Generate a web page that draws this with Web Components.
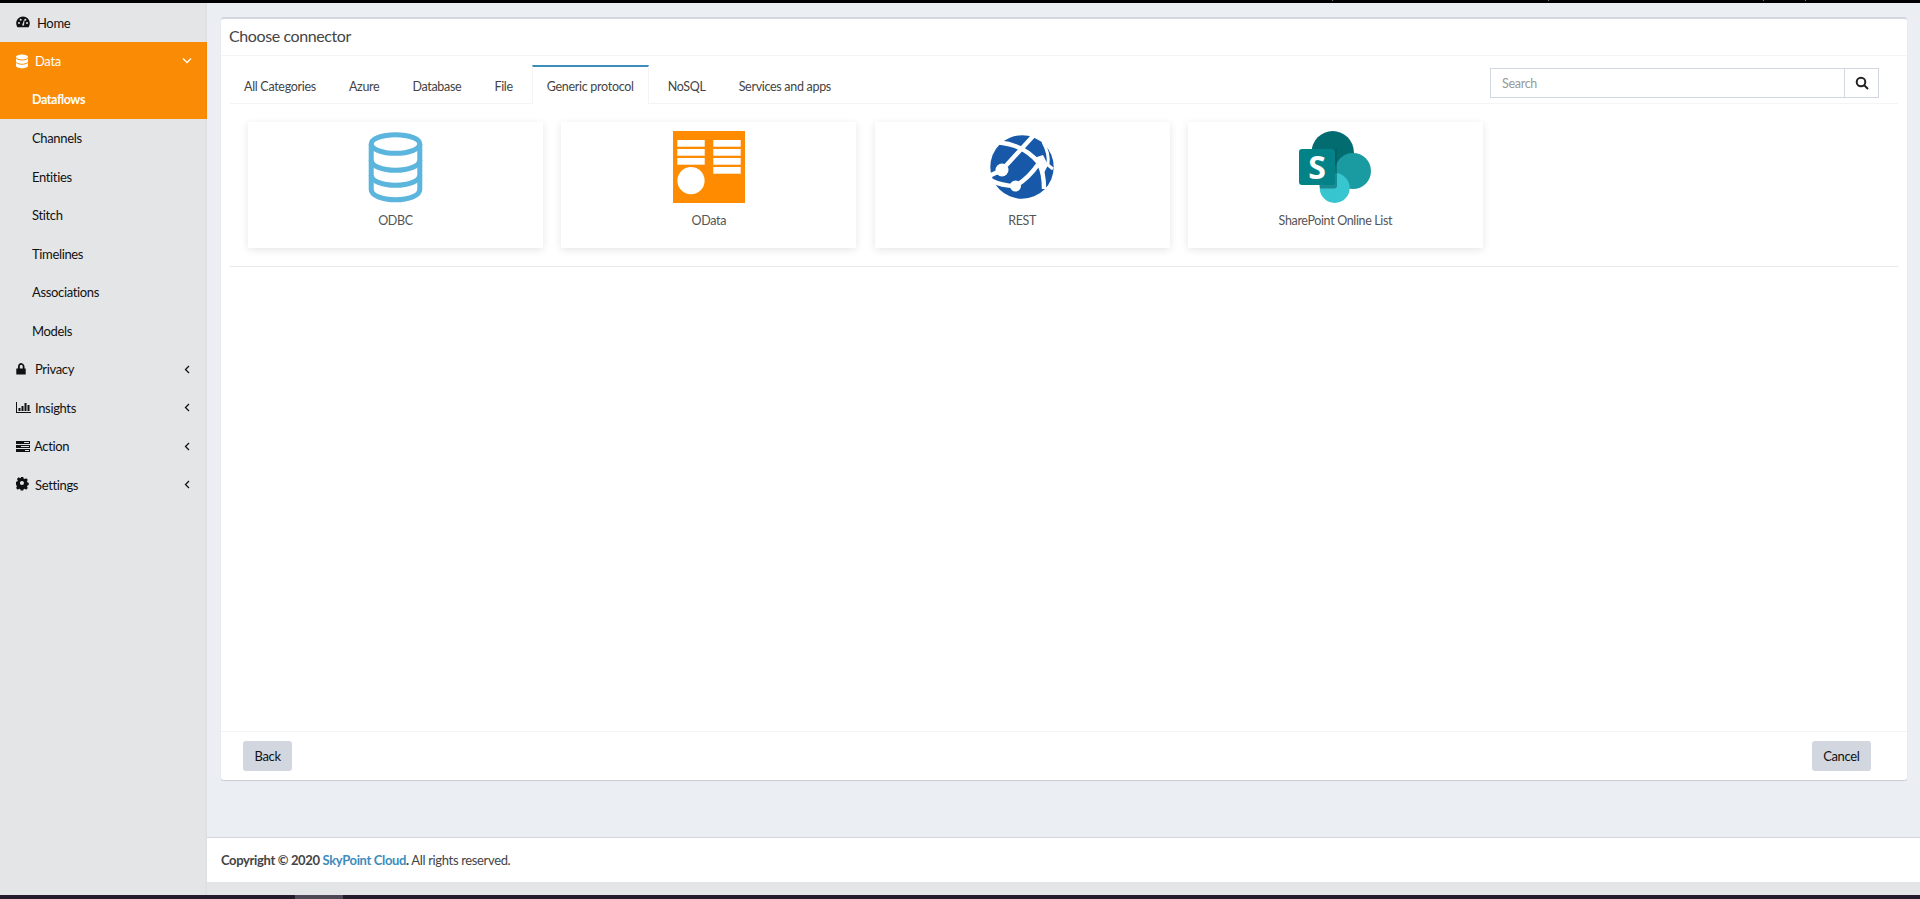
<!DOCTYPE html>
<html>
<head>
<meta charset="utf-8">
<title>Choose connector</title>
<style>
html, body { margin: 0; height: 100%; overflow: hidden; }
body { font-family: Lato, "Liberation Sans", sans-serif; font-size: 13px; letter-spacing: -.35px; color: #333; background: #e4e5e7; }
</style>
</head>
<body>
<app-shell>
	<side-nav slot="nav">
		<nav-item label="Home" icon="gauge" style="--gap: 21px"></nav-item>
		<nav-item label="Data" icon="database" active open></nav-item>
		<nav-item label="Dataflows" sub active strong></nav-item>
		<nav-item label="Channels" sub></nav-item>
		<nav-item label="Entities" sub></nav-item>
		<nav-item label="Stitch" sub></nav-item>
		<nav-item label="Timelines" sub></nav-item>
		<nav-item label="Associations" sub></nav-item>
		<nav-item label="Models" sub></nav-item>
		<nav-item label="Privacy" icon="lock" closed></nav-item>
		<nav-item label="Insights" icon="chart" closed></nav-item>
		<nav-item label="Action" icon="tasks" closed style="--gap: 18px"></nav-item>
		<nav-item label="Settings" icon="cog" closed></nav-item>
	</side-nav>
	<connector-panel slot="main" heading="Choose connector">
		<connector-tabs>
			<tab-link>All Categories</tab-link>
			<tab-link>Azure</tab-link>
			<tab-link>Database</tab-link>
			<tab-link>File</tab-link>
			<tab-link active>Generic protocol</tab-link>
			<tab-link>NoSQL</tab-link>
			<tab-link>Services and apps</tab-link>
			<search-box slot="tools"></search-box>
		</connector-tabs>
		<connector-row>
			<connector-card label="ODBC">
				<svg viewBox="0 0 72 72" width="72" height="72" fill="none" stroke="#5bb5dc" stroke-width="5">
					<ellipse cx="35.5" cy="13" rx="24.3" ry="9.3"/>
					<path d="M11.2 13v45.5c0 6 11 10.3 24.3 10.3s24.3-4.3 24.3-10.3V13"/>
					<path d="M11.2 29c0 6 11 10.3 24.3 10.3S59.8 35 59.8 29"/>
					<path d="M11.2 44c0 6 11 10.3 24.3 10.3S59.8 50 59.8 44"/>
				</svg>
			</connector-card>
			<connector-card label="OData">
				<svg viewBox="0 0 72 72" width="72" height="72">
					<rect width="72" height="72" fill="#ff8c00"/>
					<g fill="#fff">
						<rect x="4.3" y="9" width="27.4" height="6.7"/>
						<rect x="4.3" y="18" width="27.4" height="6.7"/>
						<rect x="4.3" y="27" width="27.4" height="6.7"/>
						<rect x="40.3" y="9" width="27.4" height="6.7"/>
						<rect x="40.3" y="18" width="27.4" height="6.7"/>
						<rect x="40.3" y="27" width="27.4" height="6.7"/>
						<rect x="40.3" y="36" width="27.4" height="6.7"/>
						<circle cx="18" cy="49.7" r="13.6"/>
					</g>
				</svg>
			</connector-card>
			<connector-card label="REST">
				<svg viewBox="0 0 72 72" width="72" height="72">
					<circle cx="36" cy="36" r="31.7" fill="#1759a8"/>
					<g fill="none" stroke="#fff" stroke-width="4.4">
						<path d="M13 11.500C30 13 44 21 53 32c3 6 5 14 5 26"/>
						<path d="M49 3 16 39 3 45"/>
						<path d="M53 32C47 41 38 50 29.500 55 20 55 12 53 4 49"/>
						<path d="M57 11c4 7 6 15 5 23l5 4" stroke-width="3"/>
					</g>
					<g fill="#fff">
						<circle cx="16" cy="39" r="6.500"/>
						<circle cx="29.500" cy="55" r="5.500"/>
						<path d="M48 27l9-3 5 10-5 10-4-6z"/>
					</g>
				</svg>
			</connector-card>
			<connector-card label="SharePoint Online List">
				<svg viewBox="0 0 72 72" width="72" height="72">
					<circle cx="33.7" cy="21.3" r="21.2" fill="#036c70"/>
					<circle cx="54" cy="40" r="18" fill="#1a9ba1"/>
					<circle cx="35.7" cy="57" r="15" fill="#37c6d0"/>
					<path d="M12 18h26v36.500q0 3-3 3H21z" fill="#035a5e" opacity=".55"/>
					<rect x="0" y="18" width="36" height="36" rx="3" fill="#038387"/>
					<text x="18" y="48" text-anchor="middle" letter-spacing="0" font-family="'Open Sans', 'Liberation Sans', sans-serif" font-weight="700" font-size="32" fill="#fff">S</text>
				</svg>
			</connector-card>
		</connector-row>
		<app-button slot="back">Back</app-button>
		<app-button slot="cancel">Cancel</app-button>
	</connector-panel>
	<page-footer slot="footer"></page-footer>
</app-shell>

<script>
const NAV_ICONS = {
	gauge: '<path d="M7 1.500C3.200 1.500.2 4.500.2 8.300c0 1.500.4 2.800 1.200 3.900h11.200c.8-1.100 1.200-2.400 1.200-3.900 0-3.800-3-6.800-6.800-6.800z"/><g fill="var(--hole)"><circle cx="3" cy="8" r="1"/><circle cx="4.700" cy="4.700" r="1"/><circle cx="9.300" cy="4.700" r="1"/><circle cx="11" cy="8" r="1"/><path d="M6 10.500 8 5l.5.100L8 10.500z"/></g>',
	database: '<ellipse cx="6" cy="3" rx="6" ry="2.600"/><path d="M0 4.600v2.600c0 1.400 2.700 2.500 6 2.500s6-1.100 6-2.500V4.600C11 5.900 8.700 6.600 6 6.600S1 5.900 0 4.600z"/><path d="M0 8.700v3c0 1.400 2.700 2.500 6 2.500s6-1.100 6-2.500v-3c-1 1.300-3.300 2-6 2s-5-.7-6-2z"/>',
	lock: '<path d="M2 6.500V4.500C2 2.300 3.800 1 5 1S8.500 2.300 8.500 4.500v2h1.200v6H.3v-6zm1.800 0h2.900V4.500C6.700 3.500 6 2.800 5.200 2.800s-1.400.7-1.400 1.700z"/>',
	chart: '<path d="M0 2h1v10h14v1H0z"/><rect x="2.500" y="8" width="2" height="3"/><rect x="5.500" y="6" width="2" height="5"/><rect x="8.500" y="3" width="2" height="8"/><rect x="11.500" y="5" width="2" height="6"/>',
	tasks: '<rect x="0" y="2" width="14" height="3"/><rect x="0" y="6" width="14" height="3"/><rect x="0" y="10" width="14" height="3"/><g fill="var(--hole)"><rect x="8" y="3" width="5" height="1"/><rect x="5" y="7" width="8" height="1"/><rect x="9" y="11" width="4" height="1"/></g>',
	cog: '<path fill-rule="evenodd" d="M5.500 1h3l.4 1.900 1.300.6 1.700-1 2 2-1 1.700.6 1.300 1.500.4v2.800l-1.500.4-.6 1.300 1 1.700-2 2-1.700-1-1.300.6-.4 1.300h-3l-.4-1.300-1.300-.6-1.700 1-2-2 1-1.700-.6-1.300L0 9.700V6.900l1.500-.4.6-1.300-1-1.700 2-2 1.700 1 1.300-.6zM7 5.900a2.400 2.400 0 1 0 0 4.800 2.400 2.400 0 0 0 0-4.800z" transform="translate(0 -1) scale(.85)"/>'
};

class AppShell extends HTMLElement {
	constructor() {
		super();
		this.attachShadow({ mode: 'open' });
		this.shadowRoot.innerHTML = `
		<style>
			:host { display: flex; flex-direction: column; height: 899px; }
			.top { flex: 0 0 3px; background: #000; display: flex; }
			.top i { width: 1px; height: 1px; background: #777; }
			.top i:nth-child(1) { margin-left: 1332px; }
			.top i:nth-child(2) { margin-left: 215px; }
			.top i:nth-child(3) { margin-left: 214px; }
			.top i:nth-child(4) { margin-left: 41px; }
			.middle { flex: 1; display: flex; min-height: 0; }
			.column { flex: 1; display: flex; flex-direction: column; min-width: 0; box-shadow: -1px 0 2px rgba(0,0,0,.04); }
			.content { flex: 1; background: #ebeef3; padding: 14px 13px 0 14px; }
			.bottom { flex: 0 0 4px; background: #231a2c; display: flex; }
			.bottom i { width: 48px; margin-left: 295px; background: #4f4855; }
			.foot-gap { height: 13px; background: #e4e5e7; }
		</style>
		<div class="top"><i></i><i></i><i></i><i></i></div>
		<div class="middle">
			<slot name="nav"></slot>
			<div class="column">
				<div class="content"><slot name="main"></slot></div>
				<slot name="footer"></slot>
				<div class="foot-gap"></div>
			</div>
		</div>
		<div class="bottom"><i></i></div>`;
	}
}

class SideNav extends HTMLElement {
	constructor() {
		super();
		this.attachShadow({ mode: 'open' });
		this.shadowRoot.innerHTML = `
		<style>
			:host { display: block; flex: 0 0 207px; background: #e4e5e7; padding-top: .5px; }
		</style>
		<slot></slot>`;
	}
}

class NavItem extends HTMLElement {
	constructor() {
		super();
		this.attachShadow({ mode: 'open' });
	}

	connectedCallback() {
		const icon = this.getAttribute('icon');
		const active = this.hasAttribute('active');
		const closed = this.hasAttribute('closed');
		let caret = '';
		if (this.hasAttribute('open')) caret = '<path d="M1 1.500 5 5.500 9 1.500"/>';
		if (closed) caret = '<path d="M5 1 1.500 4.500 5 8"/>';
		this.shadowRoot.innerHTML = `
		<style>
			:host { display: block; height: 38.5px; color: ${active ? '#fff' : '#111'}; background: ${active ? '#fa8c05' : 'transparent'}; --hole: ${active ? '#fa8c05' : '#e4e5e7'}; }
			a { display: flex; align-items: center; height: 100%; padding-left: ${icon ? 16 : 32}px; font-weight: ${this.hasAttribute('strong') ? 700 : 400}; ${this.hasAttribute('strong') ? 'font-size: 12.5px; letter-spacing: -.4px;' : ''} }
			.glyph { width: var(--gap, 19px); display: flex; flex: none; }
			.glyph svg { fill: currentColor; }
			.caret { margin-left: auto; margin-right: ${closed ? 13.5 : 15}px; fill: none; stroke: currentColor; stroke-width: 1.300; }
		</style>
		<a>
			${icon ? `<span class="glyph"><svg viewBox="0 0 15 15" width="15" height="15">${NAV_ICONS[icon]}</svg></span>` : ''}
			<span>${this.getAttribute('label')}</span>
			${caret ? `<svg class="caret" viewBox="0 0 10 9" width="10" height="9">${caret}</svg>` : ''}
		</a>`;
	}
}

class ConnectorPanel extends HTMLElement {
	constructor() {
		super();
		this.attachShadow({ mode: 'open' });
	}

	connectedCallback() {
		this.shadowRoot.innerHTML = `
		<style>
			:host { display: flex; flex-direction: column; height: 763px; box-sizing: border-box; background: #fff; border-top: 2px solid #d2d6de; border-radius: 3px; box-shadow: 0 1px 1px rgba(0,0,0,.15); }
			header { flex: 0 0 37px; box-sizing: border-box; display: flex; align-items: center; padding: 0 0 3px 8px; font-size: 16px; letter-spacing: -.4px; color: #444; border-bottom: 1px solid #f4f4f4; }
			.body { flex: 1; padding: 9px 9px 0; }
			footer { flex: 0 0 39px; display: flex; justify-content: space-between; padding: 9px 36px 0 22px; border-top: 1px solid #f4f4f4; }
		</style>
		<header>${this.getAttribute('heading')}</header>
		<div class="body"><slot></slot></div>
		<footer><slot name="back"></slot><slot name="cancel"></slot></footer>`;
	}
}

class ConnectorRow extends HTMLElement {
	constructor() {
		super();
		this.attachShadow({ mode: 'open' });
		this.shadowRoot.innerHTML = `
		<style>
			:host { display: flex; gap: 18.3px; padding: 18px; border-bottom: 1px solid #e9e9e9; }
		</style>
		<slot></slot>`;
	}
}

class ConnectorTabs extends HTMLElement {
	constructor() {
		super();
		this.attachShadow({ mode: 'open' });
		this.shadowRoot.innerHTML = `
		<style>
			:host { display: flex; height: 39px; box-sizing: border-box; border-bottom: 1px solid #f4f4f4; font-size: 12.5px; letter-spacing: -.3px; }
			.tools { margin-left: auto; margin-right: 19px; padding-top: 3px; }
		</style>
		<slot></slot>
		<div class="tools"><slot name="tools"></slot></div>`;
	}
}

class TabLink extends HTMLElement {
	constructor() {
		super();
		this.attachShadow({ mode: 'open' });
		this.shadowRoot.innerHTML = `
		<style>
			:host { display: flex; align-items: center; height: 39px; box-sizing: border-box; padding: 2px 14px 0; margin-right: 5px; color: #444; border-top: 2px solid transparent; }
			:host([active]) { border-top-color: #3c8dbc; border-left: 1px solid #f4f4f4; border-right: 1px solid #f4f4f4; background: #fff; padding: 2px 14px 0; }
		</style>
		<slot></slot>`;
	}
}

class SearchBox extends HTMLElement {
	constructor() {
		super();
		this.attachShadow({ mode: 'open' });
		this.shadowRoot.innerHTML = `
		<style>
			:host { display: flex; width: 389px; height: 30px; box-sizing: border-box; border: 1px solid #d2d6de; }
			input { flex: 1; min-width: 0; border: 0; outline: 0; padding: 0 11px; font: inherit; letter-spacing: inherit; }
			input::placeholder { color: #999; opacity: 1; }
			button { flex: 0 0 34px; border: 0; border-left: 1px solid #d2d6de; background: #fff; padding: 0; display: flex; align-items: center; justify-content: center; }
		</style>
		<input placeholder="Search">
		<button><svg viewBox="0 0 14 14" width="14" height="14" fill="none" stroke="#222" stroke-width="2"><circle cx="6" cy="6" r="4.300"/><path d="m9 9 4 4"/></svg></button>`;
	}
}

class ConnectorCard extends HTMLElement {
	constructor() {
		super();
		this.attachShadow({ mode: 'open' });
	}

	connectedCallback() {
		this.shadowRoot.innerHTML = `
		<style>
			:host { display: flex; flex-direction: column; align-items: center; flex: 0 0 295px; height: 126px; box-sizing: border-box; padding-top: 9px; background: #fff; color: #555; font-size: 12.5px; box-shadow: 0 2px 8px rgba(0,0,0,.1); }
			.icon { height: 72px; }
			.label { margin-top: 9px; line-height: 18px; }
		</style>
		<div class="icon"><slot></slot></div>
		<div class="label">${this.getAttribute('label')}</div>`;
	}
}

class AppButton extends HTMLElement {
	constructor() {
		super();
		this.attachShadow({ mode: 'open' });
		this.shadowRoot.innerHTML = `
		<style>
			:host { display: inline-flex; align-items: center; height: 30px; padding: 0 11.5px; box-sizing: border-box; background: #d2d6de; border-radius: 3px; color: #111; }
		</style>
		<slot></slot>`;
	}
}

class PageFooter extends HTMLElement {
	constructor() {
		super();
		this.attachShadow({ mode: 'open' });
		this.shadowRoot.innerHTML = `
		<style>
			:host { display: flex; align-items: center; height: 45px; box-sizing: border-box; padding-left: 14px; background: #fff; border-top: 1px solid #d2d6de; color: #444; }
			b { font-weight: 700; }
			a { color: #3c8dbc; }
		</style>
		<span><b>Copyright © 2020 <a>SkyPoint Cloud</a>.</b> All rights reserved.</span>`;
	}
}

customElements.define('app-shell', AppShell);
customElements.define('side-nav', SideNav);
customElements.define('nav-item', NavItem);
customElements.define('connector-row', ConnectorRow);
customElements.define('connector-panel', ConnectorPanel);
customElements.define('connector-tabs', ConnectorTabs);
customElements.define('tab-link', TabLink);
customElements.define('search-box', SearchBox);
customElements.define('connector-card', ConnectorCard);
customElements.define('app-button', AppButton);
customElements.define('page-footer', PageFooter);
</script>
</body>
</html>
